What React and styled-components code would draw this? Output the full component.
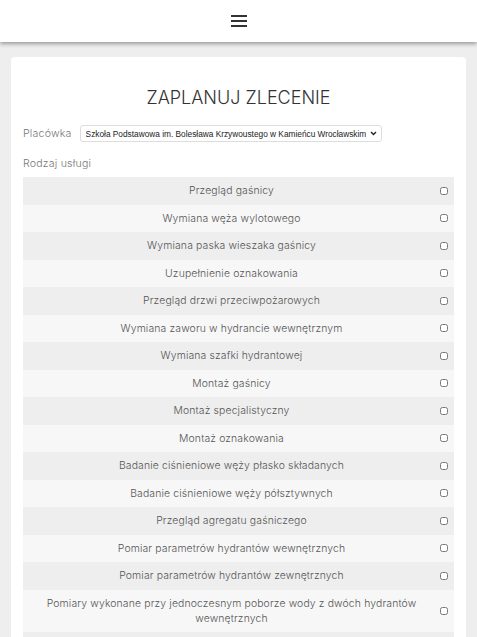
import React, { useState } from "react";
import styled, { createGlobalStyle } from "styled-components";

const GlobalStyle = createGlobalStyle`
  html, body {
    margin: 0;
    padding: 0;
    background-color: #eeeeee;
    font-family: "Inter", "Noto Sans", sans-serif;
    font-weight: 300;
    color: #555;
  }
`;

const Header = styled.header`
  height: 42px;
  background-color: #fff;
  display: flex;
  align-items: center;
  justify-content: center;
  box-shadow: 0 2px 4px rgba(0, 0, 0, 0.35);
  position: relative;
  z-index: 1;
`;

const Burger = styled.button`
  width: 16px;
  height: 12px;
  padding: 0;
  border: none;
  background: none;
  display: flex;
  flex-direction: column;
  justify-content: space-between;
  cursor: pointer;

  span {
    display: block;
    height: 2px;
    background-color: #333;
  }
`;

const Page = styled.main`
  padding: 15px 11px 0 11px;
`;

const Card = styled.section`
  background-color: #fff;
  border-radius: 4px;
  padding: 26px 12px 0 12px;
`;

const Title = styled.h1`
  margin: 0 0 12px 0;
  text-align: center;
  font-size: 18px;
  font-weight: 300;
  line-height: 30px;
  color: #333;
`;

const FieldRow = styled.div`
  display: flex;
  align-items: center;
  gap: 8px;
  margin-bottom: 14px;
`;

const Label = styled.label`
  font-size: 10.6px;
  letter-spacing: 0.2px;
  color: #777;
`;

const SelectWrap = styled.div`
  position: relative;
  width: 302px;
`;

const Select = styled.select`
  appearance: none;
  display: block;
  height: 17px;
  width: 100%;
  border: 1px solid #ddd;
  border-radius: 3px;
  background-color: #fff;
  font-family: "Liberation Sans", Arial, sans-serif;
  font-size: 8.3px;
  color: #222;
  padding: 0 14px 0 5px;
`;

const Chevron = styled.svg`
  position: absolute;
  right: 5px;
  top: 6px;
  width: 7px;
  height: 5px;
  pointer-events: none;
`;

const SectionLabel = styled.div`
  font-size: 10.6px;
  letter-spacing: 0.2px;
  color: #777;
  line-height: 16px;
  margin-bottom: 5px;
`;

const Table = styled.div`
  display: flex;
  flex-direction: column;
`;

const Row = styled.div`
  display: grid;
  grid-template-columns: 1fr 14px;
  align-items: center;
  background-color: ${(p) => (p.$odd ? "#eeeeee" : "#f7f7f7")};
`;

const Cell = styled.div`
  padding: 6.25px 8px;
  text-align: center;
  font-size: 10.4px;
  letter-spacing: 0.15px;
  line-height: 15px;
  color: #555;
`;

const Check = styled.input`
  width: 8px;
  height: 8px;
  margin: 0;
  accent-color: #888;
`;

const services = [
  "Przegląd gaśnicy",
  "Wymiana węża wylotowego",
  "Wymiana paska wieszaka gaśnicy",
  "Uzupełnienie oznakowania",
  "Przegląd drzwi przeciwpożarowych",
  "Wymiana zaworu w hydrancie wewnętrznym",
  "Wymiana szafki hydrantowej",
  "Montaż gaśnicy",
  "Montaż specjalistyczny",
  "Montaż oznakowania",
  "Badanie ciśnieniowe węży płasko składanych",
  "Badanie ciśnieniowe węży półsztywnych",
  "Przegląd agregatu gaśniczego",
  "Pomiar parametrów hydrantów wewnętrznych",
  "Pomiar parametrów hydrantów zewnętrznych",
  "Pomiary wykonane przy jednoczesnym poborze wody z dwóch hydrantów wewnętrznych",
  "Pomiary wykonane przy jednoczesnym poborze wody z dwóch hydrantów zewnętrznych",
  "Przegląd instalacji oświetlenia awaryjnego",
];

export default function App() {
  const [checked, setChecked] = useState({});

  return (
    <>
      <GlobalStyle />
      <Header>
        <Burger aria-label="menu">
          <span />
          <span />
          <span />
        </Burger>
      </Header>
      <Page>
        <Card>
          <Title>ZAPLANUJ ZLECENIE</Title>
          <FieldRow>
            <Label htmlFor="placowka">Placówka</Label>
            <SelectWrap>
              <Select id="placowka">
                <option>
                  Szkoła Podstawowa im. Bolesława Krzywoustego w Kamieńcu Wrocławskim
                </option>
              </Select>
              <Chevron viewBox="0 0 7 5">
                <path d="M1 1 L3.5 3.5 L6 1" fill="none" stroke="#222" strokeWidth="1.4" />
              </Chevron>
            </SelectWrap>
          </FieldRow>
          <SectionLabel>Rodzaj usługi</SectionLabel>
          <Table>
            {services.map((name, i) => (
              <Row key={name} $odd={i % 2 === 0}>
                <Cell>{name}</Cell>
                <Check
                  type="checkbox"
                  checked={!!checked[i]}
                  onChange={() => setChecked({ ...checked, [i]: !checked[i] })}
                />
              </Row>
            ))}
          </Table>
        </Card>
      </Page>
    </>
  );
}
